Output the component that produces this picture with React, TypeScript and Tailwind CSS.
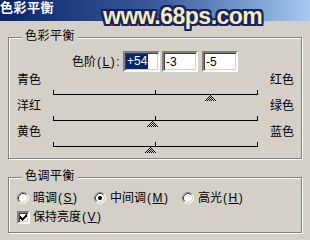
import React from 'react';

const font = "font-['Liberation_Sans','Noto_Sans_CJK_SC',sans-serif]";
const sunken =
  'border-2 border-t-[#808080] border-l-[#808080] border-r-white border-b-white bg-white shadow-[inset_1px_1px_0_#404040,inset_-1px_-1px_0_#d4d0c8]';

// slider groove with ticks at both ends and the middle, thumb below
function Track({ value, id }: { value: number; id: string }) {
  const cx = Math.round(102 + value * 1.02);
  const rows = [0, 1, 2, 3, 4, 5];
  return (
    <svg width="206" height="10" className="block overflow-visible ml-[44px]" shapeRendering="crispEdges">
      <defs>
        <pattern id={id} width="2" height="2" patternUnits="userSpaceOnUse">
          <rect width="2" height="2" fill="#d4d0c8" />
          <rect x="0" y="0" width="1" height="1" fill="#000" />
          <rect x="1" y="1" width="1" height="1" fill="#000" />
        </pattern>
      </defs>
      <rect x="0" y="6" width="205" height="1" fill="#000" />
      <rect x="0" y="2" width="1" height="4" fill="#000" />
      <rect x="102" y="2" width="1" height="4" fill="#000" />
      <rect x="204" y="2" width="1" height="4" fill="#000" />
      {rows.map((i) => (
        <rect key={i} x={cx - i} y={7 + i} width={i * 2 + 1} height="1" fill={`url(#${id})`} />
      ))}
    </svg>
  );
}

function SliderRow({ left, right, value, id }: { left: string; right: string; value: number; id: string }) {
  return (
    <div className="h-[26px]">
      <div className="h-[16px] flex justify-between items-center pl-[8px] pr-[7px] text-[12px] leading-[16px]">
        <span>{left}</span>
        <span>{right}</span>
      </div>
      <Track value={value} id={id} />
    </div>
  );
}

function Group({ title, className, children }: { title: string; className: string; children: React.ReactNode }) {
  return (
    <div className={`relative ml-[8px] w-[294px] border border-[#808080] shadow-[inset_1px_1px_0_#fff,1px_1px_0_#fff] ${className}`}>
      <span className="absolute left-[13px] -top-[9px] px-[3px] bg-[#d4d0c8] text-[12px] leading-[14px] tracking-[0.5px]">{title}</span>
      {children}
    </div>
  );
}

function Radio({ checked }: { checked?: boolean }) {
  return (
    <svg width="12" height="12" className="shrink-0">
      <circle cx="6" cy="6" r="5" fill="#fff" />
      <path d="M2.11 9.89 A5.5 5.5 0 0 1 9.89 2.11" fill="none" stroke="#808080" />
      <path d="M9.89 2.11 A5.5 5.5 0 0 1 2.11 9.89" fill="none" stroke="#fff" />
      <path d="M2.82 9.18 A4.5 4.5 0 0 1 9.18 2.82" fill="none" stroke="#404040" />
      <path d="M9.18 2.82 A4.5 4.5 0 0 1 2.82 9.18" fill="none" stroke="#d4d0c8" />
      {checked && <circle cx="6" cy="6" r="2" fill="#000" />}
    </svg>
  );
}

function Check() {
  const cols = [2, 3, 4, 3, 2, 1, 0];
  return (
    <div className={`w-[13px] h-[13px] shrink-0 box-border ${sunken}`}>
      <svg width="9" height="9" className="block" shapeRendering="crispEdges">
        {cols.map((top, x) => (
          <rect key={x} x={x + 1} y={top + 1} width="1" height="3" fill="#000" />
        ))}
      </svg>
    </div>
  );
}

// mnemonic like (S) with underlined letter
function Key({ k, colon }: { k: string; colon?: boolean }) {
  return (
    <span className="tracking-[1.5px] ml-[1px]">
      (<u>{k}</u>){colon ? ':' : ''}
    </span>
  );
}

export default function App() {
  return (
    <div className={`relative w-[310px] h-[240px] overflow-hidden bg-[#d4d0c8] text-black ${font}`}>
      {/* title bar */}
      <div className="h-[21px] bg-gradient-to-r from-[#0a246a] via-[#3a5a9a] to-[#a6caf0]">
        <span className="block pt-[1px] text-[13px] leading-[13px] font-bold text-white tracking-[0.5px]">色彩平衡</span>
      </div>

      <Group title="色彩平衡" className="mt-[16px] h-[122px]">
        <div className="pt-[13px] h-[34px] flex items-center text-[12px]">
          <div className="w-[114px] text-right pr-[2px]">
            色阶<Key k="L" colon />
          </div>
          <div className={`w-[37px] h-[21px] box-border pl-[1px] flex items-center text-[12px] ${sunken}`}>
            <span className="bg-[#0a246a] text-white leading-[15px] px-[1px]">+54</span>
          </div>
          <div className={`ml-[2px] w-[36px] h-[21px] box-border pl-[2px] flex items-center text-[12px] ${sunken}`}>-3</div>
          <div className={`ml-[4px] w-[36px] h-[21px] box-border pl-[2px] flex items-center text-[12px] ${sunken}`}>-5</div>
        </div>
        <SliderRow left="青色" right="红色" value={54} id="d1" />
        <SliderRow left="洋红" right="绿色" value={-3} id="d2" />
        <SliderRow left="黄色" right="蓝色" value={-5} id="d3" />
      </Group>

      <Group title="色调平衡" className="mt-[18px] h-[56px]">
        <div className="pt-[13px] pl-[8px] text-[12px]">
          <div className="h-[14px] flex items-center">
            <div className="w-[77px] flex items-center">
              <Radio />
              <span className="ml-[4px]">暗调<Key k="S" /></span>
            </div>
            <div className="w-[88px] flex items-center">
              <Radio checked />
              <span className="ml-[4px]">中间调<Key k="M" /></span>
            </div>
            <div className="flex items-center">
              <Radio />
              <span className="ml-[4px]">高光<Key k="H" /></span>
            </div>
          </div>
          <div className="mt-[5px] h-[14px] flex items-center">
            <Check />
            <span className="ml-[3px]">保持亮度<Key k="V" /></span>
          </div>
        </div>
      </Group>

      {/* watermark */}
      <span className="absolute left-[103px] top-[3px] text-[23px] leading-[26px] font-bold tracking-[-0.5px] text-[#f4efb0] font-['Liberation_Sans',sans-serif] [text-shadow:2px_0_0_#16206a,-2px_0_0_#16206a,0_2px_0_#16206a,0_-2px_0_#16206a,2px_2px_0_#16206a,-2px_-2px_0_#16206a,2px_-2px_0_#16206a,-2px_2px_0_#16206a]">
        www.68ps.com
      </span>
    </div>
  );
}
